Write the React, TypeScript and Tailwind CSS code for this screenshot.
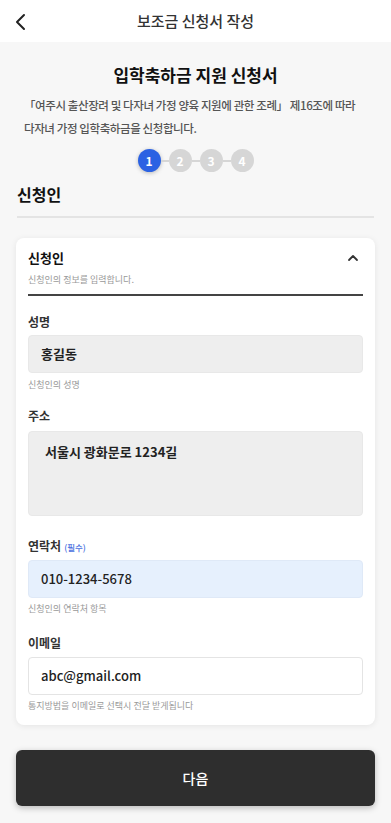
import React from "react";

const font = { fontFamily: '"Noto Sans CJK KR", "Noto Sans", sans-serif' };

function Step({ n, active }: { n: number; active?: boolean }) {
  return (
    <div
      className={
        "w-[23px] h-[23px] rounded-full flex items-center justify-center text-[12px] font-bold text-white " +
        (active ? "bg-[#2b62e3] shadow-[0_1px_4px_rgba(0,0,0,0.25)]" : "bg-[#d6d6d6]")
      }
    >
      {n}
    </div>
  );
}

export default function App() {
  return (
    <div className="w-[391px] min-h-[823px] bg-[#f7f7f7] text-[#222]" style={font}>
      <div className="h-[42px] bg-white flex items-center relative">
        <svg className="absolute left-[14px] top-[13px]" width="14" height="18" viewBox="0 0 14 18" fill="none">
          <path d="M10 2 L3 9 L10 16" stroke="#222" strokeWidth="2" strokeLinecap="round" strokeLinejoin="round" />
        </svg>
        <div className="w-full text-center text-[15px] font-medium text-[#333]">보조금 신청서 작성</div>
      </div>

      <div className="pt-[20px] px-[16px]">
        <div className="text-center text-[17px] font-bold text-[#111] leading-[26px]">입학축하금 지원 신청서</div>
        <div className="mt-[6px] px-[8px] text-[11.5px] leading-[23px] text-[#555] font-medium tracking-[-0.4px]">
          「여주시 출산장려 및 다자녀 가정 양육 지원에 관한 조례」 제16조에 따라
          <br />
          다자녀 가정 입학축하금을 신청합니다.
        </div>
        <div className="mt-[9px] flex items-center justify-center">
          <Step n={1} active />
          <div className="w-[8px] h-[2px] bg-[#d6d6d6]" />
          <Step n={2} />
          <div className="w-[8px] h-[2px] bg-[#d6d6d6]" />
          <Step n={3} />
          <div className="w-[8px] h-[2px] bg-[#d6d6d6]" />
          <Step n={4} />
        </div>
        <div className="mt-[10px] px-[1px] text-[16px] font-bold text-[#111] leading-[24px]">신청인</div>
        <div className="mt-[10px] h-[2px] bg-[#e4e4e4] mx-[1px]" />

        <div className="mt-[20px] bg-white rounded-[8px] shadow-[0_1px_6px_rgba(0,0,0,0.08)] px-[12px] pt-[10px] pb-[12px]">
          <div className="flex items-start justify-between">
            <div>
              <div className="text-[13px] font-bold text-[#111] leading-[20px]">신청인</div>
              <div className="mt-[5px] text-[9px] text-[#999] leading-[14px]">신청인의 정보를 입력합니다.</div>
            </div>
            <svg className="mt-[6px] mr-[4px]" width="12" height="8" viewBox="0 0 12 8" fill="none">
              <path d="M2 6 L6 2 L10 6" stroke="#333" strokeWidth="1.8" strokeLinecap="round" strokeLinejoin="round" />
            </svg>
          </div>
          <div className="mt-[7px] h-[2px] bg-[#444]" />

          <div className="mt-[17px] text-[12px] font-bold text-[#333] leading-[18px]">성명</div>
          <div className="mt-[4px] h-[38px] rounded-[4px] bg-[#eeeeee] border border-[#e8e8e8] flex items-center px-[12px] text-[13px] font-bold text-[#222]">
            홍길동
          </div>
          <div className="mt-[5px] text-[9px] text-[#999] leading-[14px]">신청인의 성명</div>

          <div className="mt-[15px] text-[12px] font-bold text-[#333] leading-[18px]">주소</div>
          <div className="mt-[6px] h-[85px] rounded-[4px] bg-[#eeeeee] border border-[#e8e8e8] px-[16px] pt-[10px] text-[13px] font-bold text-[#222] leading-[20px]">
            서울시 광화문로 1234길
          </div>

          <div className="mt-[21px] text-[12px] font-bold text-[#333] leading-[18px] flex items-baseline gap-[3px]">
            연락처<span className="text-[8.5px] text-[#4a6fe0] font-medium">(필수)</span>
          </div>
          <div className="mt-[4px] h-[38px] rounded-[4px] bg-[#e6f0fd] border border-[#dfe9f7] flex items-center px-[12px] text-[13px] font-medium text-[#222]">
            010-1234-5678
          </div>
          <div className="mt-[4px] text-[9px] text-[#999] leading-[14px]">신청인의 연락처 항목</div>

          <div className="mt-[18px] text-[12px] font-bold text-[#333] leading-[18px]">이메일</div>
          <div className="mt-[5px] h-[38px] rounded-[4px] bg-white border border-[#e4e4e4] flex items-center px-[12px] text-[13px] font-medium text-[#222]">
            abc@gmail.com
          </div>
          <div className="mt-[4px] text-[9px] text-[#999] leading-[14px]">통지방법을 이메일로 선택시 전달 받게됩니다</div>
        </div>

        <button className="mt-[25px] w-full h-[56px] rounded-[6px] bg-[#2e2e2e] text-white text-[14px] font-medium shadow-[0_2px_6px_rgba(0,0,0,0.25)]">
          다음
        </button>
      </div>
    </div>
  );
}
